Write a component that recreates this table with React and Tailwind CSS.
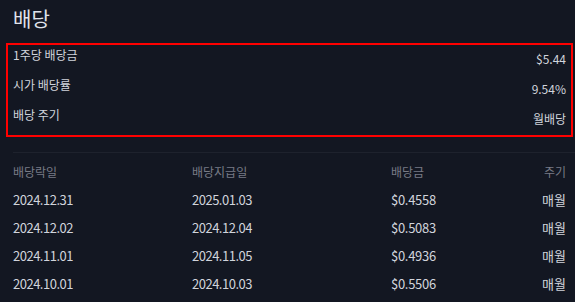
export default function App() {
  const rows = [
    ["2024.12.31", "2025.01.03", "$0.4558", "매월"],
    ["2024.12.02", "2024.12.04", "$0.5083", "매월"],
    ["2024.11.01", "2024.11.05", "$0.4936", "매월"],
    ["2024.10.01", "2024.10.03", "$0.5506", "매월"],
  ];
  return (
    <div className="w-[575px] h-[302px] overflow-hidden bg-[#131722] text-[#d1d4dc] font-['Noto_Sans_CJK_KR',sans-serif]">
      <div className="pl-[13px] pt-[5px] h-[43px] text-[20px] leading-[28px] text-[#e0e3eb]">배당</div>
      <div className="ml-[6px] mr-[2px] h-[94px] border-2 border-[#ff0000] pl-[5px] pr-[5px] pt-[1px] text-[12px]">
        <div className="flex justify-between items-start h-[30px]">
          <span className="leading-[18px]">1주당 배당금</span>
          <span className="leading-[18px] pt-[4px]">$5.44</span>
        </div>
        <div className="flex justify-between items-start h-[30px]">
          <span className="leading-[18px]">시가 배당률</span>
          <span className="leading-[18px] pt-[4px]">9.54%</span>
        </div>
        <div className="flex justify-between items-start h-[30px]">
          <span className="leading-[18px]">배당 주기</span>
          <span className="leading-[18px] pt-[4px]">월배당</span>
        </div>
      </div>
      <div className="ml-[13px] mt-[15px] h-px bg-[#1e222d]" />
      <div className="mt-[5px] pl-[13px] pr-[9px] grid grid-cols-[179px_199px_1fr_auto] text-[13px] leading-[28px]">
        <div className="text-[#787b86] text-[12px]">배당락일</div>
        <div className="text-[#787b86] text-[12px]">배당지급일</div>
        <div className="text-[#787b86] text-[12px]">배당금</div>
        <div className="text-[#787b86] text-[12px] text-right">주기</div>
        {rows.map((r, i) => (
          <div key={i} className="contents">
            <div className="tracking-[-0.5px]">{r[0]}</div>
            <div className="tracking-[-0.5px]">{r[1]}</div>
            <div className="tracking-[-0.3px]">{r[2]}</div>
            <div className="text-right">{r[3]}</div>
          </div>
        ))}
      </div>
    </div>
  );
}
